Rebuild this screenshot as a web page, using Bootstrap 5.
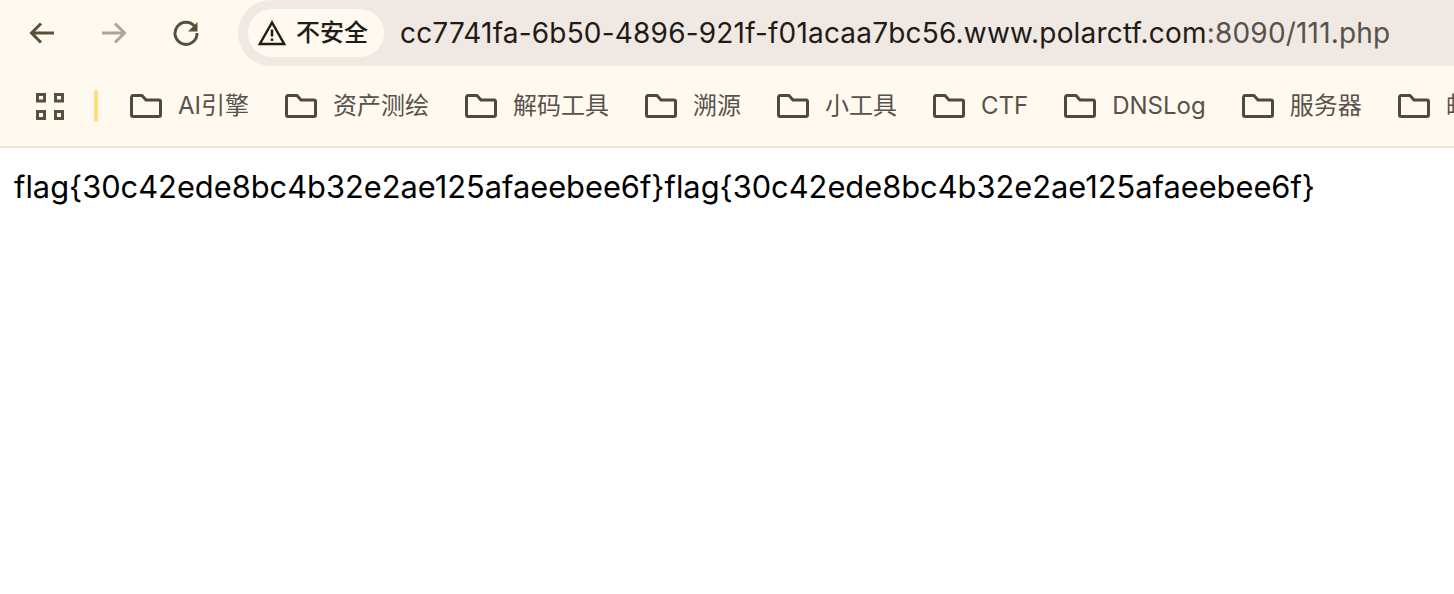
<!doctype html>
<html lang="zh"><head><meta charset="utf-8">
<link href="https://cdn.jsdelivr.net/npm/bootstrap@5.3.0/dist/css/bootstrap.min.css" rel="stylesheet">
<style>
html,body{height:100%;overflow:hidden;background:#fff}
body{font-family:"Liberation Sans","Noto Sans CJK SC",sans-serif}
.chrome-top{height:66px;background:#fff9ef}
.nav-ico{width:72px;height:66px}
.nav-ico svg{display:block}
.nav-strip{padding-left:6px;width:238px}
.addr{background:#efe8e3;border-radius:33px 0 0 33px;padding-left:10px}
.sec-pill{height:48px;width:136px;background:#fff9ef;border-radius:24px;padding-left:10px;gap:10px;font-size:24px;color:#1f1d18;font-weight:500}
.url{font-family:Inter,"Liberation Sans",sans-serif;font-size:28px;letter-spacing:.19px;color:#1f1b16;margin-left:16px;white-space:nowrap}
.url span{color:#57524a}
.marks{height:82px;background:#fff9ef;border-bottom:2px solid #ebe5d6;padding-left:36px;overflow:hidden}
.sep{width:4px;height:32px;background:#fde07b;border-radius:2px;margin-left:30px;margin-right:32px}
.mark-item{gap:16px;font-size:24px;color:#57524a;white-space:nowrap;margin-right:36px;flex:none}
.mark-item svg{flex:none}
.lat{font-family:Inter,"Liberation Sans",sans-serif}
.flagline{font-family:Inter,"Liberation Sans",sans-serif;font-size:30.8px;color:#000;padding:20px 0 0 14px;line-height:38px;white-space:nowrap;margin:0}
</style></head><body>
<div class="chrome-top d-flex">
 <div class="nav-strip d-flex flex-shrink-0">
  <div class="nav-ico d-flex align-items-center justify-content-center"><svg width="28" height="28" viewBox="0 0 28 28" fill="none" stroke="#58503a" stroke-width="3"><path d="M26 14H4M13 4.500 3.500 14l9.500 9.500"/></svg></div>
  <div class="nav-ico d-flex align-items-center justify-content-center"><svg width="28" height="28" viewBox="0 0 28 28" fill="none" stroke="#aba69b" stroke-width="3"><path d="M2 14h22M15 4.500 24.500 14 15 23.500"/></svg></div>
  <div class="nav-ico d-flex align-items-center justify-content-center"><svg width="28" height="28" viewBox="0 0 28 28" fill="none" stroke="#58503a" stroke-width="3"><path d="M23 8A11 11 0 1 0 25 14"/><path d="M25.500 3v9.500H16z" fill="#58503a" stroke="none"/></svg></div>
 </div>
 <div class="addr flex-grow-1 d-flex align-items-center">
  <div class="sec-pill d-flex align-items-center flex-shrink-0">
   <svg width="28" height="26" viewBox="0 0 28 26" fill="none" stroke="#1f1d18" stroke-width="2.500"><path d="M14 2.500 1.800 24h24.400z"/><path d="M14 9.500v7M14 18.500v2.500"/></svg>
   <span>不安全</span>
  </div>
  <div class="url">cc7741fa-6b50-4896-921f-f01acaa7bc56.www.polarctf.com<span>:8090/111.php</span></div>
 </div>
</div>
<div class="marks d-flex align-items-center">
 <svg width="28" height="27" viewBox="0 0 28 27" fill="none" stroke="#57503f" stroke-width="3" class="flex-shrink-0"><path d="M1.500 1.500h7v6.500h-7zM19.500 1.500h7v6.500h-7zM1.500 18.500h7v7h-7zM19.500 18.500h7v7h-7z"/></svg>
 <div class="sep flex-shrink-0"></div>
 <div class="mark-item d-flex align-items-center"><svg width="32" height="24" viewBox="0 0 32 24" fill="none" stroke="#4f4a3c" stroke-width="3" stroke-linejoin="round"><path d="M1.500 3a1.500 1.500 0 0 1 1.500-1.500h9l4 4.500h13a1.500 1.500 0 0 1 1.500 1.500V21a1.500 1.500 0 0 1-1.500 1.500H3A1.500 1.500 0 0 1 1.500 21z"/></svg><span><span class="lat">AI</span>引擎</span></div>
 <div class="mark-item d-flex align-items-center"><svg width="32" height="24" viewBox="0 0 32 24" fill="none" stroke="#4f4a3c" stroke-width="3" stroke-linejoin="round"><path d="M1.500 3a1.500 1.500 0 0 1 1.500-1.500h9l4 4.500h13a1.500 1.500 0 0 1 1.500 1.500V21a1.500 1.500 0 0 1-1.500 1.500H3A1.500 1.500 0 0 1 1.500 21z"/></svg><span>资产测绘</span></div>
 <div class="mark-item d-flex align-items-center"><svg width="32" height="24" viewBox="0 0 32 24" fill="none" stroke="#4f4a3c" stroke-width="3" stroke-linejoin="round"><path d="M1.500 3a1.500 1.500 0 0 1 1.500-1.500h9l4 4.500h13a1.500 1.500 0 0 1 1.500 1.500V21a1.500 1.500 0 0 1-1.500 1.500H3A1.500 1.500 0 0 1 1.500 21z"/></svg><span>解码工具</span></div>
 <div class="mark-item d-flex align-items-center"><svg width="32" height="24" viewBox="0 0 32 24" fill="none" stroke="#4f4a3c" stroke-width="3" stroke-linejoin="round"><path d="M1.500 3a1.500 1.500 0 0 1 1.500-1.500h9l4 4.500h13a1.500 1.500 0 0 1 1.500 1.500V21a1.500 1.500 0 0 1-1.500 1.500H3A1.500 1.500 0 0 1 1.500 21z"/></svg><span>溯源</span></div>
 <div class="mark-item d-flex align-items-center"><svg width="32" height="24" viewBox="0 0 32 24" fill="none" stroke="#4f4a3c" stroke-width="3" stroke-linejoin="round"><path d="M1.500 3a1.500 1.500 0 0 1 1.500-1.500h9l4 4.500h13a1.500 1.500 0 0 1 1.500 1.500V21a1.500 1.500 0 0 1-1.500 1.500H3A1.500 1.500 0 0 1 1.500 21z"/></svg><span>小工具</span></div>
 <div class="mark-item d-flex align-items-center"><svg width="32" height="24" viewBox="0 0 32 24" fill="none" stroke="#4f4a3c" stroke-width="3" stroke-linejoin="round"><path d="M1.500 3a1.500 1.500 0 0 1 1.500-1.500h9l4 4.500h13a1.500 1.500 0 0 1 1.500 1.500V21a1.500 1.500 0 0 1-1.500 1.500H3A1.500 1.500 0 0 1 1.500 21z"/></svg><span class="lat">CTF</span></div>
 <div class="mark-item d-flex align-items-center"><svg width="32" height="24" viewBox="0 0 32 24" fill="none" stroke="#4f4a3c" stroke-width="3" stroke-linejoin="round"><path d="M1.500 3a1.500 1.500 0 0 1 1.500-1.500h9l4 4.500h13a1.500 1.500 0 0 1 1.500 1.500V21a1.500 1.500 0 0 1-1.500 1.500H3A1.500 1.500 0 0 1 1.500 21z"/></svg><span class="lat">DNSLog</span></div>
 <div class="mark-item d-flex align-items-center"><svg width="32" height="24" viewBox="0 0 32 24" fill="none" stroke="#4f4a3c" stroke-width="3" stroke-linejoin="round"><path d="M1.500 3a1.500 1.500 0 0 1 1.500-1.500h9l4 4.500h13a1.500 1.500 0 0 1 1.500 1.500V21a1.500 1.500 0 0 1-1.500 1.500H3A1.500 1.500 0 0 1 1.500 21z"/></svg><span>服务器</span></div>
 <div class="mark-item d-flex align-items-center"><svg width="32" height="24" viewBox="0 0 32 24" fill="none" stroke="#4f4a3c" stroke-width="3" stroke-linejoin="round"><path d="M1.500 3a1.500 1.500 0 0 1 1.500-1.500h9l4 4.500h13a1.500 1.500 0 0 1 1.500 1.500V21a1.500 1.500 0 0 1-1.500 1.500H3A1.500 1.500 0 0 1 1.500 21z"/></svg><span>邮箱</span></div>
</div>
<p class="flagline">flag{30c42ede8bc4b32e2ae125afaeebee6f}flag{30c42ede8bc4b32e2ae125afaeebee6f}</p>
<script src="https://cdn.jsdelivr.net/npm/bootstrap@5.3.0/dist/js/bootstrap.bundle.min.js"></script>
</body></html>
